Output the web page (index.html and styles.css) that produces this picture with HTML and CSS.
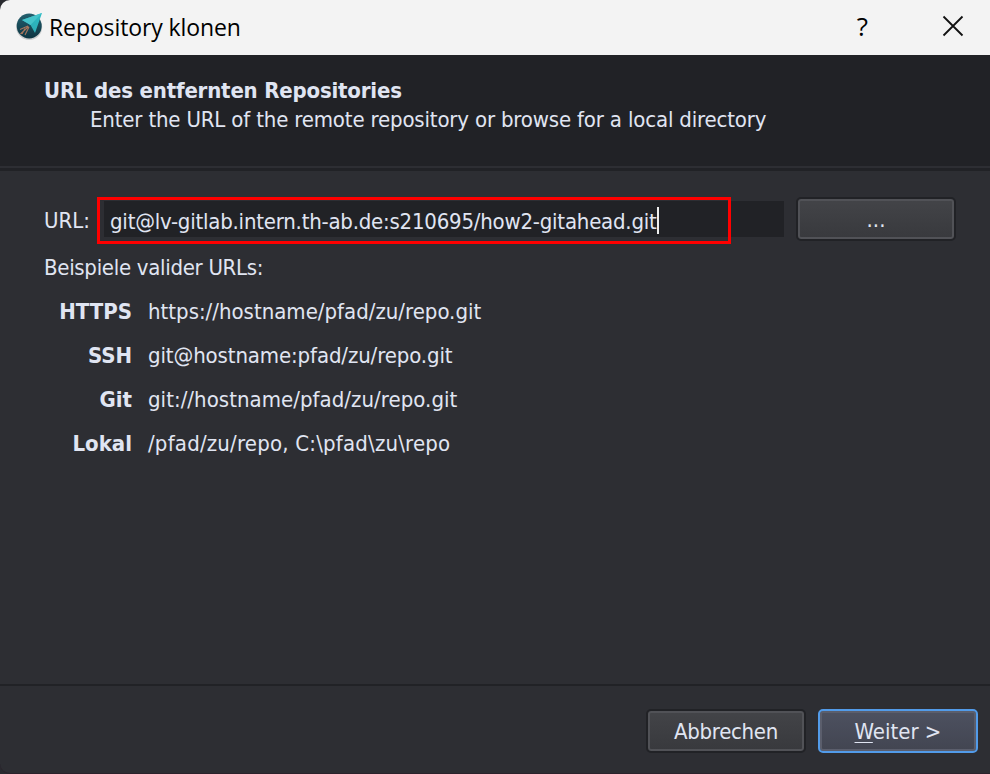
FILE: index.html
```html
<!DOCTYPE html>
<html lang="de">
<head>
<meta charset="utf-8">
<title>Repository klonen</title>
<link rel="stylesheet" href="styles.css">
</head>
<body>
<div class="dialog">
  <header class="titlebar">
    <svg class="logo" width="28" height="30" viewBox="0 0 28 30">
      <defs>
        <linearGradient id="disc" x1="0" y1="0" x2="0" y2="1"><stop offset="0" stop-color="#24606f"/><stop offset="1" stop-color="#0c3441"/></linearGradient>
        <linearGradient id="plane" x1="1" y1="0" x2="0.3" y2="1"><stop offset="0" stop-color="#2cbcc5"/><stop offset="1" stop-color="#2da9b3"/></linearGradient>
      </defs>
      <circle cx="13.2" cy="15" r="13" fill="#c9cccd"/>
      <circle cx="13.2" cy="14" r="12.500" fill="url(#disc)"/>
      <path d="M26 1 6 8l8.500 5L19 21z" fill="url(#plane)"/>
      <path d="M26 1 6 8l8.500 5z" fill="#45c3ca"/>
      <path d="M12 14 4 17.500M12.500 14.500l-8 7.500M13 15l-4 8M9 16.500 6 22" fill="none" stroke="#a8755c" stroke-width="1.100"/>
    </svg>
    <h1 class="title">Repository klonen</h1>
    <span class="help">?</span>
    <svg class="close" width="22" height="22" viewBox="0 0 22 22"><path d="M1.500 1.500l19 19M20.500 1.500l-19 19" stroke="#111" stroke-width="1.800" fill="none"/></svg>
  </header>
  <section class="banner">
    <h2 class="heading">URL des entfernten Repositories</h2>
    <p class="sub">Enter the URL of the remote repository or browse for a local directory</p>
  </section>
  <main class="content">
    <div class="url-row">
      <label class="url-label">URL:</label>
      <div class="field"><span class="url">git@lv-gitlab.intern.th-ab.de:s210695/how2-gitahead.git</span><i class="caret"></i><div class="marker"></div></div>
      <button class="btn browse">...</button>
    </div>
    <p class="examples-title">Beispiele valider URLs:</p>
    <dl class="examples">
      <dt>HTTPS</dt><dd>https://hostname/pfad/zu/repo.git</dd>
      <dt>SSH</dt><dd class="ssh">git@hostname:pfad/zu/repo.git</dd>
      <dt>Git</dt><dd class="git">git://hostname/pfad/zu/repo.git</dd>
      <dt>Lokal</dt><dd class="local">/pfad/zu/repo, C:\pfad\zu\repo</dd>
    </dl>
  </main>
  <footer class="footer">
    <button class="btn cancel">Abbrechen</button>
    <button class="btn primary"><span class="key">W</span>eiter &gt;</button>
  </footer>
</div>
</body>
</html>
```
FILE: styles.css
```css
* { box-sizing: border-box; }
body { margin: 0; background: #292a2f; }
h1, h2, p, dl, dd { margin: 0; }
.dialog {
  width: 990px;
  height: 774px;
  display: flex;
  flex-direction: column;
  overflow: hidden;
  background: #2d2e33;
  border-radius: 10px 0 0 10px;
  border-bottom: 1px solid #2b222b;
  color: #e0e5f2;
  font: 22px/28px "DejaVu Sans Condensed", "DejaVu Sans", sans-serif;
  font-stretch: condensed;
  white-space: nowrap;
}
.titlebar {
  height: 55px;
  flex: none;
  display: flex;
  align-items: center;
  padding: 0 26px 0 16px;
  background: #f3f3f3;
  color: #000;
  font-family: "Open Sans", "Noto Sans", sans-serif;
  font-stretch: normal;
}
.logo { margin-bottom: 1px; }
.title { margin: 0 0 1px 5px; font-size: 23px; font-weight: 400; letter-spacing: -0.1px; }
.help { margin: 0 74px 3px auto; font-size: 26px; }
.close { margin-bottom: 3px; }
.banner {
  height: 116px;
  flex: none;
  padding: 21px 44px 0;
  background: linear-gradient(#2d2e33, #2d2e33) 0 111px / 100% 2px no-repeat #212226;
}
.heading { font-size: 22px; line-height: 29px; letter-spacing: -0.19px; }
.sub { padding-left: 46px; line-height: 29px; letter-spacing: -0.17px; }
.content { flex: 1; padding: 26px 34px 0 44px; }
.url-row { display: flex; height: 44px; }
.url-label { width: 60px; padding-top: 10px; }
.field {
  position: relative;
  width: 680px;
  height: 36px;
  margin-top: 4px;
  padding: 7px 6px 0;
  background: #212226;
  display: flex;
}
.url { letter-spacing: -0.22px; }
.caret { width: 2px; height: 27px; margin-top: -1px; background: #eee; }
.marker { position: absolute; left: -7px; top: -4px; width: 634px; height: 47px; border: 3px solid #f00; }
.btn {
  width: 160px;
  height: 44px;
  padding: 2px 0 0;
  border: 2px solid #212226;
  border-radius: 5px;
  box-shadow: inset 0 0 0 2px #515257;
  background: linear-gradient(#434448, #38393d);
  color: inherit;
  font: inherit;
}
.browse { margin-left: 12px; }
.cancel { letter-spacing: -0.3px; }
.examples-title { margin-top: 13px; letter-spacing: -0.3px; }
.examples { display: grid; grid-template-columns: 88px auto; column-gap: 16px; row-gap: 16px; margin-top: 16px; justify-content: start; }
.ssh { letter-spacing: -0.12px; }
.git { letter-spacing: 0.04px; }
.local { letter-spacing: 0.2px; }
dt { font-weight: 700; text-align: right; }
.footer {
  height: 89px;
  flex: none;
  display: flex;
  justify-content: flex-end;
  gap: 12px;
  padding: 23px 12px 0 0;
  border-top: 2px solid #212226;
}
.primary { border-color: #529be9; box-shadow: inset 0 0 0 2px #5b5e6c; background: linear-gradient(#4d5160, #424551); }
.key { text-decoration: underline; text-decoration-thickness: 1px; text-underline-offset: 3px; }
```
